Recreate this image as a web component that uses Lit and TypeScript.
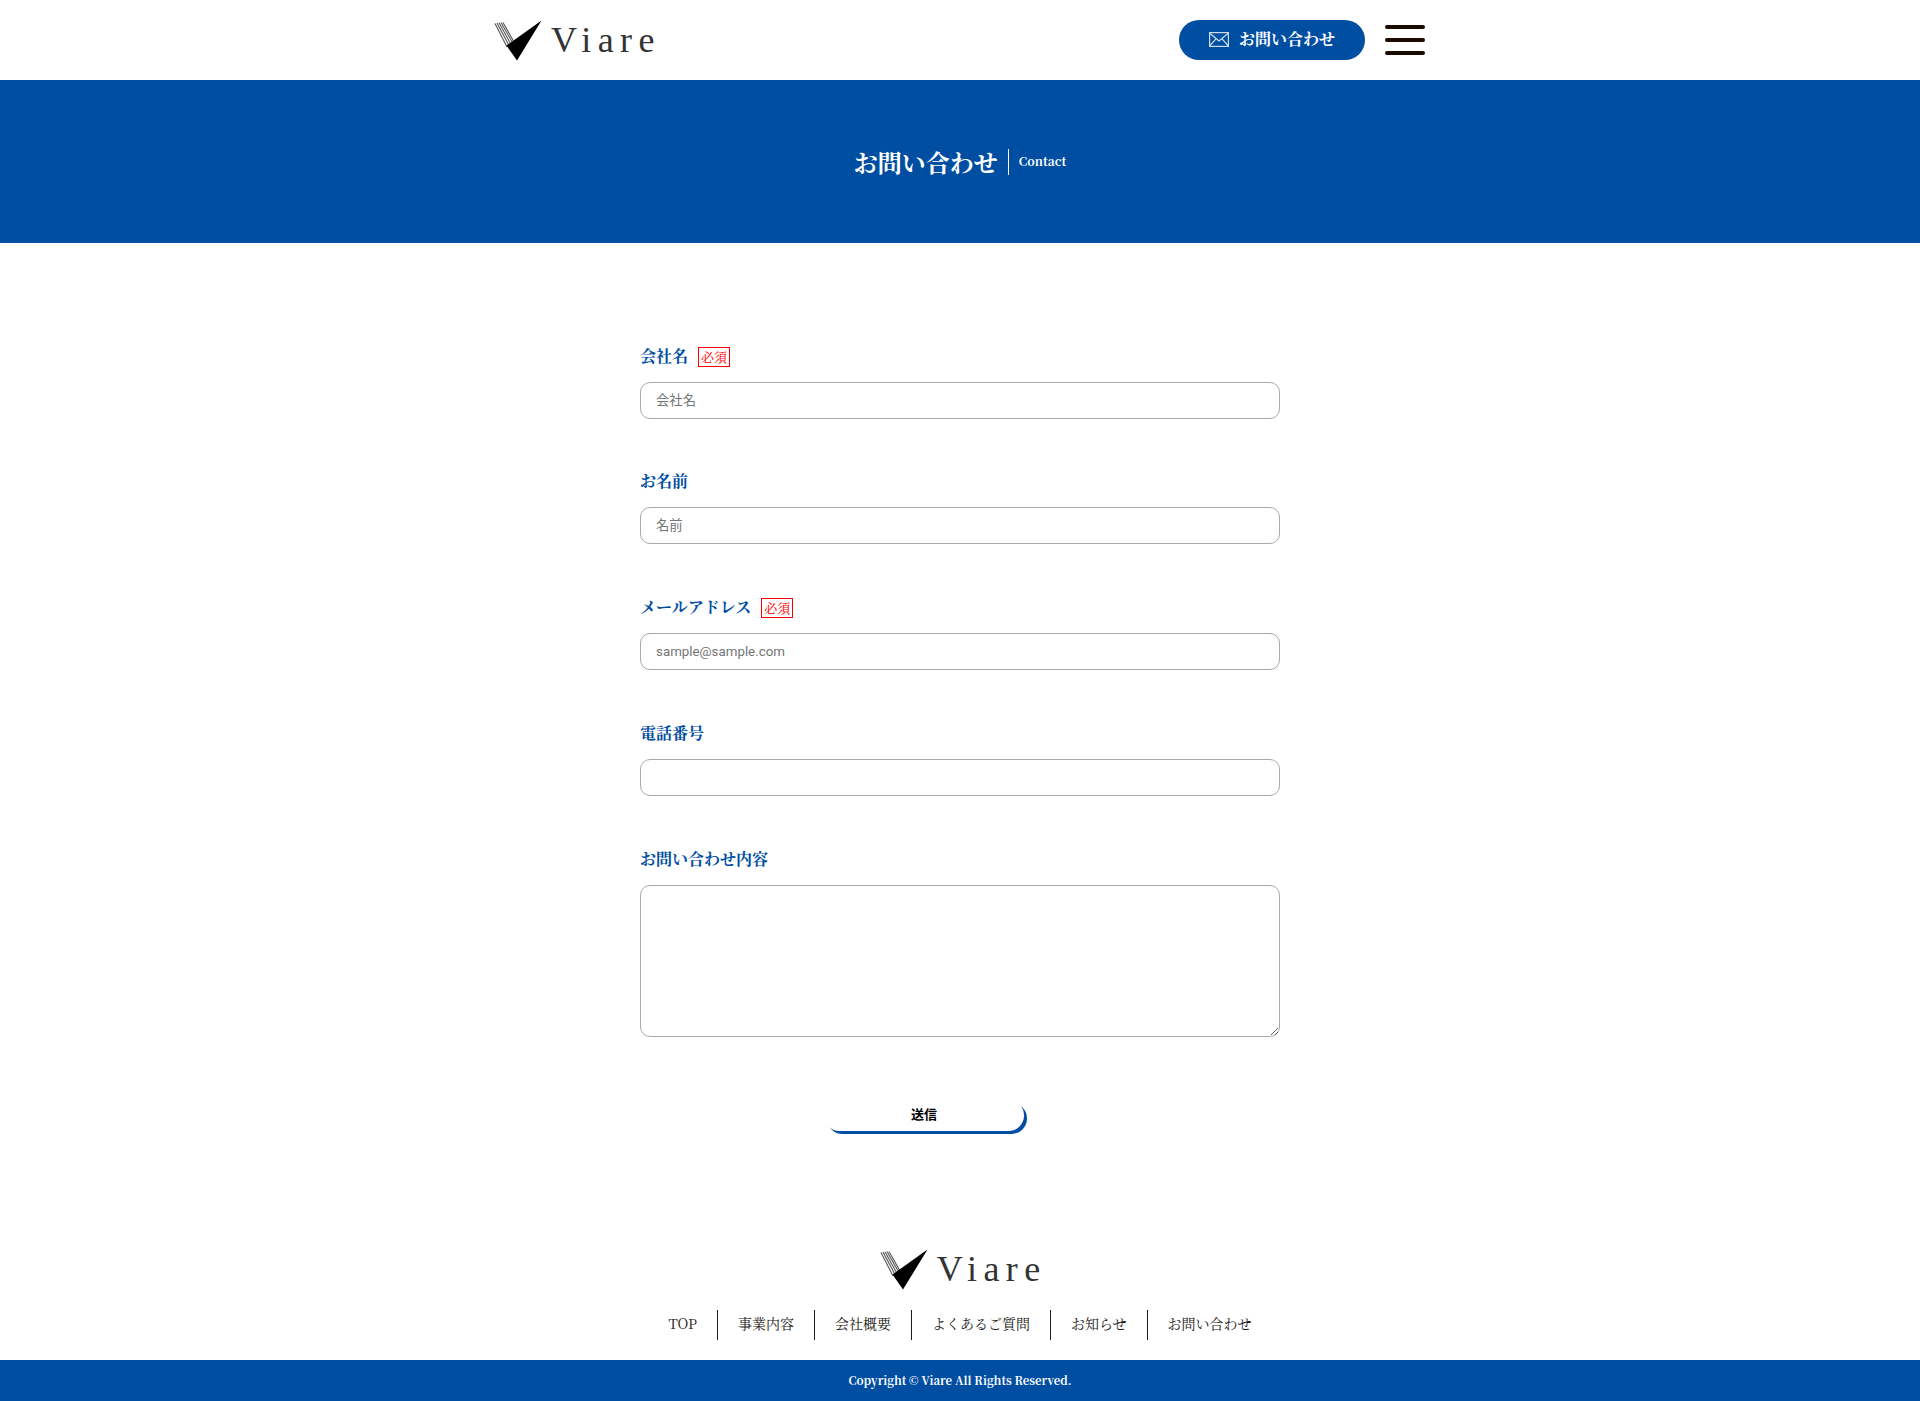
import { css, html, LitElement } from 'lit';
import { customElement } from 'lit/decorators.js';

const fields = [
  { label: '会社名', required: true, placeholder: '会社名' },
  { label: 'お名前', required: false, placeholder: '名前' },
  { label: 'メールアドレス', required: true, placeholder: 'sample@sample.com' },
  { label: '電話番号', required: false, placeholder: '' },
];

const navItems = ['TOP', '事業内容', '会社概要', 'よくあるご質問', 'お知らせ', 'お問い合わせ'];

const logo = html`
  <div class="logo">
    <svg width="48" height="41" viewBox="0 0 48 41" aria-hidden="true">
      <g stroke="#555" stroke-width="1.1" fill="none">
        <path d="M1 3.5 L13 27" />
        <path d="M3 3 L15 25.5" />
        <path d="M5 2.8 L17 24.5" />
        <path d="M7 2.5 L19 23.5" />
        <path d="M9 2.5 L20 22" />
      </g>
      <path d="M47.5 0.5 L23 40.5 L12.5 25.5 Z" fill="#000" />
    </svg>
    <span class="logo-text">Viare</span>
  </div>
`;

@customElement('app-root')
export class AppRoot extends LitElement {
  static styles = css`
    :host {
      display: block;
      --blue: #004ea2;
      --serif: 'Noto Serif CJK JP', 'Noto Serif', 'Liberation Serif', 'Noto Sans CJK JP', serif;
      font-family: var(--serif);
      color: #231815;
      background: #fff;
    }

    * {
      box-sizing: border-box;
    }

    .header {
      height: 80px;
      display: flex;
      align-items: center;
      justify-content: space-between;
      width: 932px;
      margin: 0 auto;
      padding-right: 1px;
    }

    .logo {
      display: flex;
      align-items: flex-start;
      gap: 9px;
      height: 41px;
    }

    .logo svg {
      display: block;
    }

    .logo-text {
      font-family: 'Liberation Serif', serif;
      font-size: 36px;
      line-height: 40px;
      letter-spacing: 6.4px;
      margin-right: -6.4px;
      color: #333;
    }

    .header-right {
      display: flex;
      align-items: center;
      gap: 20px;
    }

    .contact-btn {
      width: 186px;
      height: 40px;
      margin-bottom: 1px;
      padding-bottom: 2px;
      border-radius: 20px;
      background: var(--blue);
      color: #fff;
      font-size: 16px;
      font-weight: 700;
      display: flex;
      align-items: center;
      justify-content: center;
      gap: 10px;
    }

    .contact-btn svg {
      margin-top: 2px;
    }

    .menu {
      width: 40px;
      display: flex;
      flex-direction: column;
      gap: 9px;
    }

    .menu span {
      display: block;
      height: 4px;
      border-radius: 2px;
      background: #1a0a00;
    }

    .hero {
      height: 163px;
      background: var(--blue);
      color: #fff;
      display: flex;
      align-items: center;
      justify-content: center;
    }

    .hero h1 {
      margin: 0;
      font-size: 24px;
      font-weight: 700;
      line-height: 26px;
      padding-right: 10px;
      border-right: 1px solid #fff;
    }

    .hero-sub {
      font-size: 12px;
      font-weight: 700;
      padding: 0 0 2px 10px;
    }

    .form {
      width: 640px;
      margin: 0 auto;
      padding-top: 102px;
      display: flex;
      flex-direction: column;
      gap: 52px;
    }

    .field {
      display: flex;
      flex-direction: column;
      gap: 16px;
    }

    .field:first-child {
      margin-bottom: -1px;
    }

    .label-row {
      display: flex;
      align-items: center;
      gap: 10px;
      height: 21px;
    }

    .label {
      font-size: 16px;
      font-weight: 700;
      color: var(--blue);
    }

    .required {
      width: 32px;
      height: 20px;
      margin-top: 2px;
      border: 1px solid #f00;
      color: #f00;
      font-size: 13px;
      line-height: 18px;
      text-align: center;
    }

    input,
    textarea {
      display: block;
      width: 100%;
      border: 1px solid #aaa;
      border-radius: 10px;
      background: #fff;
      padding: 0 15px;
      font-family: Roboto, 'Noto Sans CJK JP', sans-serif;
      font-size: 13.333px;
    }

    input {
      height: 37px;
    }

    textarea {
      height: 152px;
    }

    .actions {
      width: 640px;
      margin: 0 auto;
      padding: 63px 0 0 184px;
    }

    .submit {
      display: block;
      width: 200px;
      height: 31px;
      border: 0;
      border-radius: 20px;
      background: #fff;
      box-shadow: 3px 3px 0 var(--blue);
      color: #000;
      font-family: Roboto, 'Noto Sans CJK JP', sans-serif;
      font-size: 13px;
      font-weight: 700;
      padding: 0 0 4px;
    }

    .footer {
      margin-top: 118px;
      display: flex;
      flex-direction: column;
      align-items: center;
    }

    .nav {
      display: flex;
      margin-top: 20px;
      height: 30px;
    }

    .nav a {
      display: flex;
      align-items: center;
      padding: 0 20px 5px;
      font-size: 14px;
      border-left: 1px solid #231815;
    }

    .nav a:first-child {
      border-left: 0;
    }

    .copyright {
      width: 100%;
      height: 41px;
      margin-top: 20px;
      padding-bottom: 2px;
      background: var(--blue);
      color: #fff;
      font-size: 11.4px;
      font-weight: 700;
      display: flex;
      align-items: center;
      justify-content: center;
    }
  `;

  render() {
    return html`
      <header class="header">
        ${logo}
        <div class="header-right">
          <div class="contact-btn">
            <svg width="20" height="15" viewBox="0 0 20 15" fill="none" stroke="#cfdcec" stroke-width="1.2">
              <rect x="0.6" y="0.6" width="18.8" height="13.8" />
              <path d="M0.5 1 L10 9 L19.5 1 M0.5 14 L7 6.8 M19.5 14 L13 6.8" />
            </svg>
            お問い合わせ
          </div>
          <div class="menu"><span></span><span></span><span></span></div>
        </div>
      </header>

      <section class="hero">
        <h1>お問い合わせ</h1>
        <span class="hero-sub">Contact</span>
      </section>

      <form class="form">
        ${fields.map(
          (field) => html`
            <div class="field">
              <div class="label-row">
                <span class="label">${field.label}</span>
                ${field.required ? html`<span class="required">必須</span>` : null}
              </div>
              <input type="text" placeholder="${field.placeholder}" />
            </div>
          `
        )}
        <div class="field">
          <div class="label-row"><span class="label">お問い合わせ内容</span></div>
          <textarea></textarea>
        </div>
      </form>
      <div class="actions"><button class="submit" type="button">送信</button></div>

      <footer class="footer">
        ${logo}
        <nav class="nav">${navItems.map((item) => html`<a>${item}</a>`)}</nav>
        <div class="copyright">Copyright © Viare All Rights Reserved.</div>
      </footer>
    `;
  }
}
